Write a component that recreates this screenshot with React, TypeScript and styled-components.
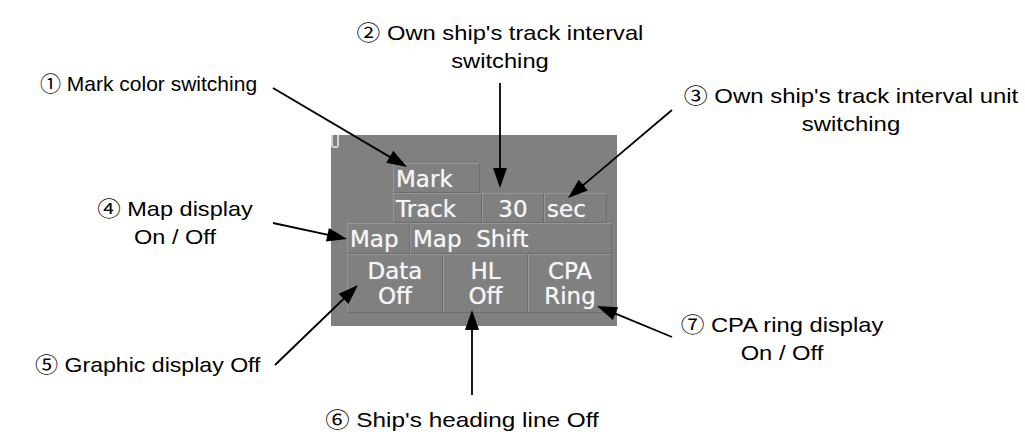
import React from "react"
import styled, { createGlobalStyle } from "styled-components"

const Global = createGlobalStyle`
  body {
    margin: 0;
    background: #fff;
  }
`

const Stage = styled.div`
  position: relative;
  width: 1025px;
  height: 434px;
  background: #fff;
  overflow: hidden;
`

// annotation text around the panel; the source figure is a bit stretched sideways
const Note = styled.div<{ $x: number; $y: number; $center?: boolean; $sx?: number }>`
  position: absolute;
  left: ${p => p.$x}px;
  top: ${p => p.$y}px;
  transform: ${p => (p.$center ? "translateX(-50%) " : "")}scaleX(${p => p.$sx || 1});
  transform-origin: ${p => (p.$center ? "center" : "left")} top;
  text-align: ${p => (p.$center ? "center" : "left")};
  font-family: "Liberation Sans", "Noto Sans CJK JP", Arial, sans-serif;
  font-size: 21px;
  line-height: 28px;
  color: #000;
  white-space: nowrap;
`

const Panel = styled.div`
  position: absolute;
  left: 331px;
  top: 135px;
  width: 286px;
  height: 191px;
  box-sizing: border-box;
  background: #808080;
  padding: 28px 5px 0 16px;
  display: flex;
  flex-direction: column;
`

const Hook = styled.span`
  position: absolute;
  left: 0;
  top: 0;
  width: 8px;
  height: 13px;
  box-sizing: border-box;
  border: 2px solid #d4d4d4;
  border-top: none;
  border-radius: 0 0 3px 3px;
`

const Row = styled.div<{ $indent?: number }>`
  display: flex;
  margin-left: ${p => p.$indent || 0}px;
`

const Key = styled.div<{ $w: number; $h: number; $center?: boolean }>`
  width: ${p => p.$w}px;
  height: ${p => p.$h}px;
  box-sizing: border-box;
  border: 1px solid;
  border-color: #969696 #6d6d6d #6d6d6d #969696;
  padding: ${p => (p.$center ? "4px 0 0 0" : "1px 0 0 2px")};
  text-align: ${p => (p.$center ? "center" : "left")};
  font-family: "DejaVu Sans", Verdana, sans-serif;
  font-size: 23px;
  line-height: ${p => (p.$center ? "25px" : "28px")};
  color: #f6f6f6;
  text-shadow: 0 0 1px rgba(255, 255, 255, 0.6);
  white-space: pre;
  overflow: hidden;
`

const Value = styled(Key)`
  padding-top: 1px;
  line-height: 28px;
`

const Overlay = styled.svg`
  position: absolute;
  left: 0;
  top: 0;
  pointer-events: none;
`

type Pt = [number, number]

function Arrow({ from, to }: { from: Pt; to: Pt }) {
  const dx = to[0] - from[0]
  const dy = to[1] - from[1]
  const len = Math.hypot(dx, dy)
  const ux = dx / len
  const uy = dy / len
  const head = 20
  const half = 7
  const bx = to[0] - ux * head
  const by = to[1] - uy * head
  const pts = [
    `${to[0]},${to[1]}`,
    `${bx - uy * half},${by + ux * half}`,
    `${bx + uy * half},${by - ux * half}`,
  ].join(" ")
  return (
    <g>
      <line x1={from[0]} y1={from[1]} x2={bx + ux * 2} y2={by + uy * 2} stroke="#000" strokeWidth={1.8} />
      <polygon points={pts} fill="#000" />
    </g>
  )
}

const arrows: { from: Pt; to: Pt }[] = [
  { from: [273, 88], to: [407, 167] },
  { from: [500, 83], to: [500, 188] },
  { from: [672, 110], to: [568, 198] },
  { from: [273, 223], to: [347, 239] },
  { from: [275, 365], to: [358, 285] },
  { from: [472, 395], to: [472, 310] },
  { from: [672, 337], to: [597, 306] },
]

export default function App() {
  return (
    <>
      <Global />
      <Stage>
        <Note $x={40} $y={70}>① Mark color switching</Note>
        <Note $x={500} $y={19} $center $sx={1.13}>
          ② Own ship's track interval
          <br />
          switching
        </Note>
        <Note $x={851} $y={82} $center $sx={1.14}>
          ③ Own ship's track interval unit
          <br />
          switching
        </Note>
        <Note $x={175} $y={195} $center $sx={1.12}>
          ④ Map display
          <br />
          On / Off
        </Note>
        <Note $x={35} $y={351} $sx={1.1}>⑤ Graphic display Off</Note>
        <Note $x={462} $y={406} $center $sx={1.16}>⑥ Ship's heading line Off</Note>
        <Note $x={782} $y={311} $center $sx={1.13}>
          ⑦ CPA ring display
          <br />
          On / Off
        </Note>

        <Panel>
          <Hook />
          <Row $indent={46}>
            <Key $w={87} $h={30}>Mark</Key>
          </Row>
          <Row $indent={46}>
            <Key $w={89} $h={30}>Track</Key>
            <Value $w={62} $h={30} $center>30</Value>
            <Key $w={63} $h={30}>sec</Key>
          </Row>
          <Row>
            <Key $w={63} $h={31}>Map</Key>
            <Key $w={202} $h={31}>{"Map  Shift"}</Key>
          </Row>
          <Row>
            <Key $w={96} $h={59} $center>
              Data
              <br />
              Off
            </Key>
            <Key $w={85} $h={59} $center>
              HL
              <br />
              Off
            </Key>
            <Key $w={84} $h={59} $center>
              CPA
              <br />
              Ring
            </Key>
          </Row>
        </Panel>

        <Overlay width={1025} height={434}>
          {arrows.map((a, i) => (
            <Arrow key={i} from={a.from} to={a.to} />
          ))}
        </Overlay>
      </Stage>
    </>
  )
}
